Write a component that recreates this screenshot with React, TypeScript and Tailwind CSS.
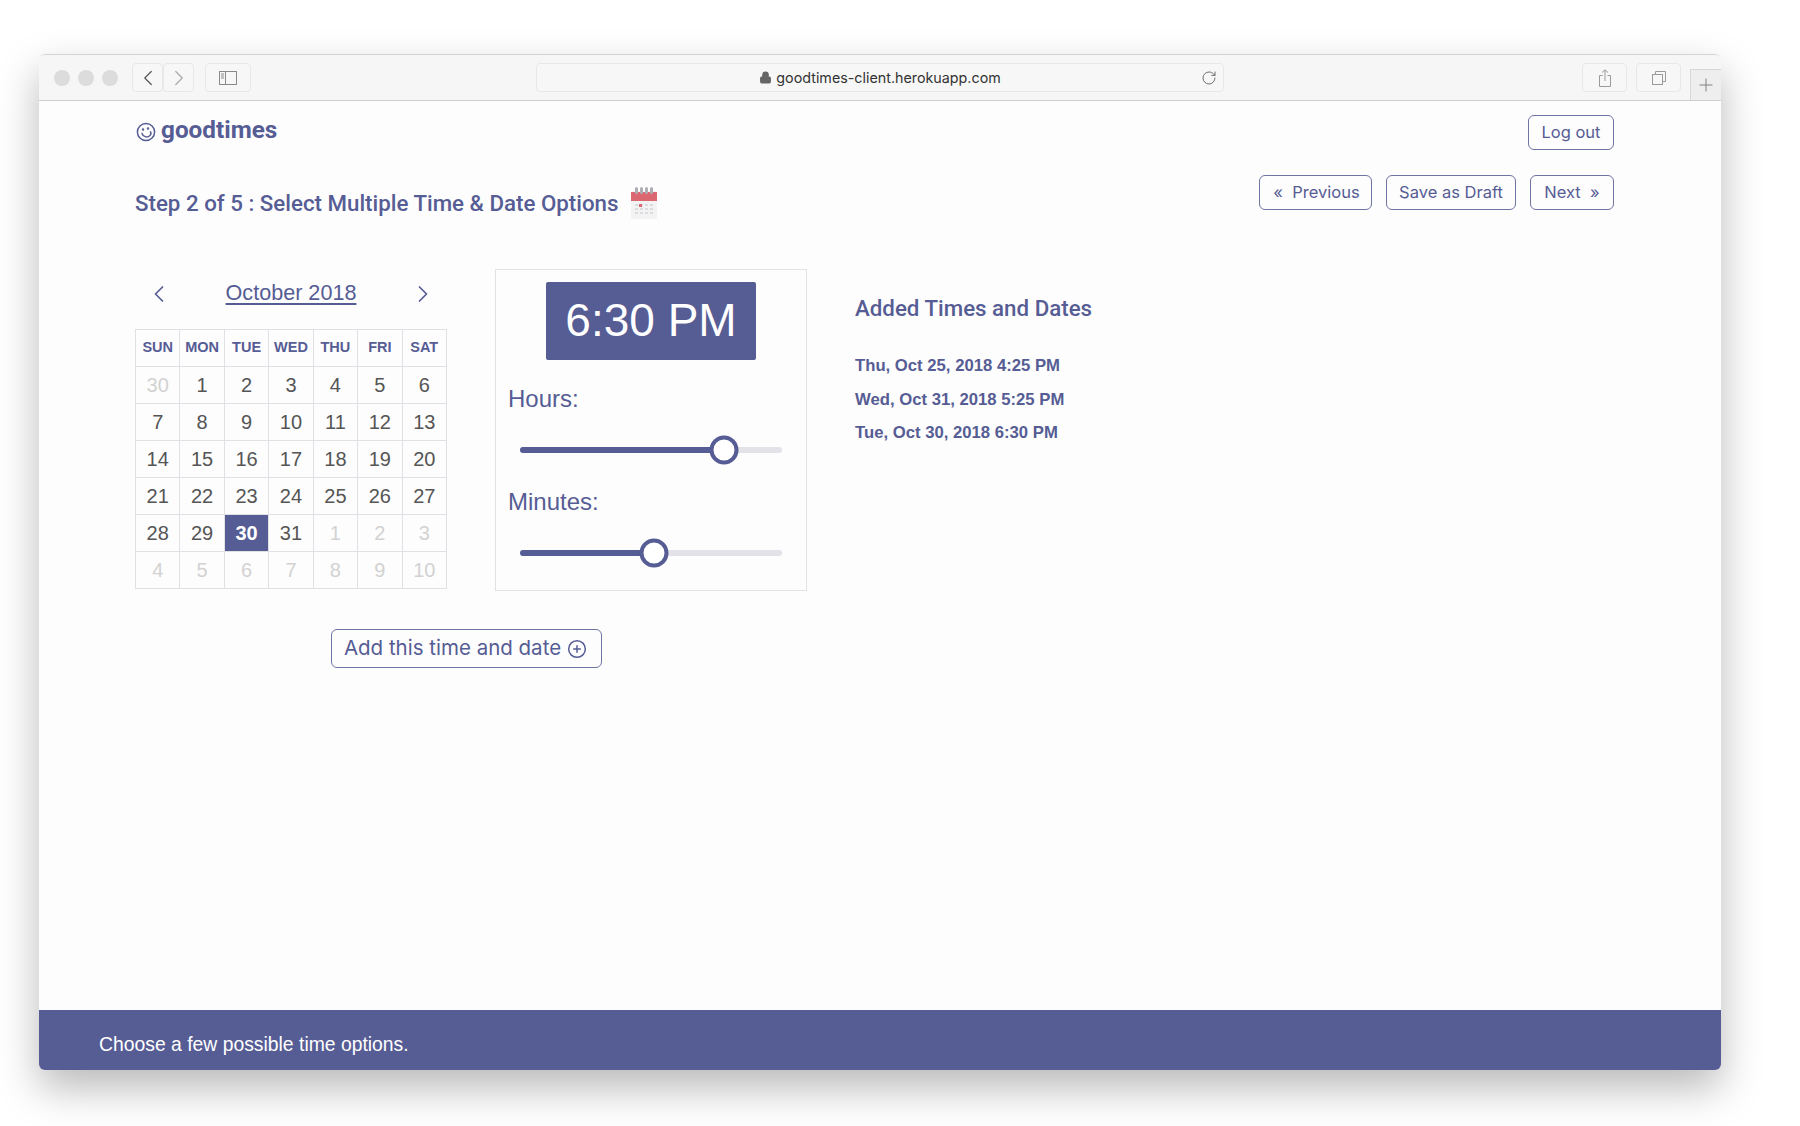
import React from 'react';
import { ChevronLeft, ChevronRight, CirclePlus, Lock, RotateCw } from 'lucide-react';

const headers = ['SUN', 'MON', 'TUE', 'WED', 'THU', 'FRI', 'SAT'];

// m = muted day outside of the month, s = selected
const weeks: (number | string)[][] = [
  ['m30', 1, 2, 3, 4, 5, 6],
  [7, 8, 9, 10, 11, 12, 13],
  [14, 15, 16, 17, 18, 19, 20],
  [21, 22, 23, 24, 25, 26, 27],
  [28, 29, 's30', 31, 'm1', 'm2', 'm3'],
  ['m4', 'm5', 'm6', 'm7', 'm8', 'm9', 'm10'],
];

const added = ['Thu, Oct 25, 2018 4:25 PM', 'Wed, Oct 31, 2018 5:25 PM', 'Tue, Oct 30, 2018 6:30 PM'];

const ToolbarButton = ({ className, children }: { className: string; children?: React.ReactNode }) => (
  <div className={`h-[29px] flex items-center justify-center border border-[#e8e8e8] rounded-[4px] bg-[#f7f7f7] text-[#8a8a8a] ${className}`}>
    {children}
  </div>
);

const OutlineButton = ({ className = '', children }: { className?: string; children: React.ReactNode }) => (
  <button className={`h-[35px] flex items-center justify-center whitespace-nowrap border-[1.5px] border-[#6f74a2] rounded-[6px] text-[#565c94] font-['Inter',sans-serif] ${className}`}>
    {children}
  </button>
);

const Slider = ({ percent }: { percent: number }) => (
  <div className="relative h-[6px] mx-[24px] rounded-full bg-[#e2e2e8]">
    <div className="h-full rounded-full bg-[#565c94]" style={{ width: `${percent}%` }} />
    <div
      className="absolute top-1/2 w-[29px] h-[29px] -translate-x-1/2 -translate-y-1/2 rounded-full border-[4px] border-[#565c94] bg-white"
      style={{ left: `${percent}%` }}
    />
  </div>
);

const CalendarEmoji = () => (
  <svg width="28" height="34" viewBox="0 0 28 34" className="opacity-80">
    <rect x="1" y="5" width="26" height="28" rx="2" fill="#f1f1f3" />
    <rect x="1" y="6" width="26" height="9" fill="#d3434f" />
    {[5, 10, 15, 20].map((x) => (
      <rect key={x} x={x} y="1" width="3" height="7" rx="1.5" fill="#9a9aa2" />
    ))}
    {[18, 22, 26].map((y) =>
      [5, 10, 15, 20].map((x) => <rect key={`${x}-${y}`} x={x} y={y} width="3" height="2" fill="#d4d4d9" />)
    )}
    <rect x="9" y="18" width="3" height="3" fill="#d3434f" />
  </svg>
);

const App = () => {
  return (
    <div className="w-[1800px] h-[1126px] bg-white pt-[54px] pl-[39px] overflow-hidden font-['Liberation_Sans',Arial,sans-serif]">
      <div className="w-[1682px] h-[1016px] flex flex-col rounded-[6px] bg-[#fdfdfd] overflow-hidden border-t border-[#d4d4d4] shadow-[0_18px_42px_rgba(0,0,0,0.28)]">
        {/* Browser bar */}
        <div className="h-[46px] shrink-0 flex items-center pl-[15px] bg-[#f6f6f6] border-b border-[#cfcfcf]">
          <div className="flex gap-[8px]">
            <span className="w-[16px] h-[16px] rounded-full bg-[#dcdcdc]" />
            <span className="w-[16px] h-[16px] rounded-full bg-[#dcdcdc]" />
            <span className="w-[16px] h-[16px] rounded-full bg-[#dcdcdc]" />
          </div>
          <div className="flex ml-[14px]">
            <ToolbarButton className="w-[31px]"><ChevronLeft size={26} strokeWidth={1.1} className="text-[#555]" /></ToolbarButton>
            <ToolbarButton className="w-[31px]"><ChevronRight size={26} strokeWidth={1.1} className="text-[#aaa]" /></ToolbarButton>
          </div>
          <ToolbarButton className="w-[46px] ml-[11px]">
            <svg width="18" height="14" viewBox="0 0 18 14" fill="none" stroke="#8a8a8a">
              <rect x="0.5" y="0.5" width="17" height="13" />
              <path d="M6.5 0.5V13.5" />
              <path d="M2 3h3M2 5h3M2 7h3" />
            </svg>
          </ToolbarButton>
          <div className="w-[689px] h-[29px] ml-[285px] relative flex items-center justify-center border border-[#e8e8e8] rounded-[4px] bg-[#f7f7f7] text-[14.3px] text-[#333] font-['Inter',sans-serif]">
            <Lock size={13} fill="#666" className="text-[#666] mr-[4px]" />
            goodtimes-client.herokuapp.com
            <RotateCw size={16} strokeWidth={1.4} className="absolute right-[6px] text-[#666]" />
          </div>
          <ToolbarButton className="w-[45px] ml-[358px]">
            <svg width="14" height="18" viewBox="0 0 14 18" fill="none" stroke="#9a9a9a">
              <path d="M4.5 6.5H1.5V17.5H12.5V6.5H9.5M7 12V1M4 3.5L7 0.8L10 3.5" />
            </svg>
          </ToolbarButton>
          <ToolbarButton className="w-[45px] ml-[9px]">
            <svg width="14" height="14" viewBox="0 0 14 14" fill="none" stroke="#9a9a9a">
              <rect x="0.5" y="3.5" width="10" height="10" />
              <path d="M3.5 3.5V0.5H13.5V10.5H10.5" />
            </svg>
          </ToolbarButton>
          <div className="w-[31px] h-[31px] ml-[9px] self-end flex items-center justify-center border-l border-t border-[#d8d8d8] bg-[#eeeeee] text-[#777]">
            <svg width="14" height="14" viewBox="0 0 14 14" stroke="#808080"><path d="M7 0.5V13.5M0.5 7H13.5" /></svg>
          </div>
        </div>

        {/* Page */}
        <div className="flex-1 relative pl-[96px] pr-[107px]">
          <div className="flex justify-between items-start">
            <div className="flex items-center gap-[5px] pt-[15px] pl-[1px] text-[#565c94]">
              <svg width="20" height="20" viewBox="0 0 20 20" fill="none" stroke="#565c94" strokeWidth="1.5" className="mt-[3px]">
                <circle cx="10" cy="10" r="8.6" />
                <path d="M6 11.5c1 3 5 4.5 7.5 2.5 1.5-1.2 1.6-3 1-4" strokeLinecap="round" />
                <circle cx="7" cy="7.5" r="0.5" />
                <circle cx="12" cy="6.5" r="0.5" />
              </svg>
              <span className="text-[24.3px] leading-[28px] font-bold font-['Roboto',sans-serif]">goodtimes</span>
            </div>
            <OutlineButton className="w-[86px] mt-[14px] text-[16.5px]">Log out</OutlineButton>
          </div>

          <div className="flex justify-between items-start h-[35px] mt-[25px]">
            <div className="flex items-center gap-[12px] text-[#565c94] pt-[11px]">
              <h1 className="text-[22.3px] leading-[34px] font-medium font-['Roboto',sans-serif]">Step 2 of 5 : Select Multiple Time &amp; Date Options</h1>
              <CalendarEmoji />
            </div>
            <div className="flex gap-[14px]">
              <OutlineButton className="w-[113px] text-[16.5px] pl-[2px]">«&nbsp;&nbsp;Previous</OutlineButton>
              <OutlineButton className="w-[130px] text-[16.5px]">Save as Draft</OutlineButton>
              <OutlineButton className="w-[84px] text-[16.5px]">Next&nbsp;&nbsp;»</OutlineButton>
            </div>
          </div>

          <div className="flex items-start mt-[59px]">
            {/* Calendar */}
            <div className="w-[312px]">
              <div className="flex items-center justify-between h-[60px] pb-[11px] px-[10px] text-[#565c94]">
                <ChevronLeft size={28} strokeWidth={1.5} />
                <span className="text-[21.6px] underline underline-offset-[3px]">October 2018</span>
                <ChevronRight size={28} strokeWidth={1.5} />
              </div>
              <table className="w-full table-fixed border-collapse">
                <thead>
                  <tr>
                    {headers.map((h) => (
                      <th key={h} className="h-[37px] border border-[#e0e0e5] p-0 text-[14.5px] font-bold text-[#565c94]">{h}</th>
                    ))}
                  </tr>
                </thead>
                <tbody>
                  {weeks.map((week, i) => (
                    <tr key={i}>
                      {week.map((d, j) => {
                        const label = String(d).replace(/^[ms]/, '');
                        const muted = String(d).startsWith('m');
                        const selected = String(d).startsWith('s');
                        return (
                          <td
                            key={j}
                            className={`h-[37px] border border-[#e0e0e5] p-0 text-center text-[20px] ${
                              selected ? 'bg-[#565c94] text-white font-bold' : muted ? 'text-[#d2d2d2]' : 'text-[#555555]'
                            }`}
                          >
                            {label}
                          </td>
                        );
                      })}
                    </tr>
                  ))}
                </tbody>
              </table>
            </div>

            {/* Time picker */}
            <div className="w-[312px] h-[322px] ml-[48px] border border-[#e2e2e6] flex flex-col text-[#565c94]">
              <div className="w-[210px] h-[78px] mt-[12px] pb-[2px] mx-auto flex items-center justify-center rounded-[2px] bg-[#565c94] text-white text-[46px]">
                6:30 PM
              </div>
              <div className="text-[24px] leading-[30px] mt-[24px] ml-[12px]">Hours:</div>
              <div className="mt-[33px]"><Slider percent={78} /></div>
              <div className="text-[24px] leading-[30px] mt-[34px] ml-[12px]">Minutes:</div>
              <div className="mt-[33px]"><Slider percent={51} /></div>
            </div>

            {/* Added list */}
            <div className="ml-[48px] text-[#565c94]">
              <h2 className="text-[22.3px] leading-[28px] mt-[25px] font-['Roboto',sans-serif] font-medium">Added Times and Dates</h2>
              <ul className="mt-[34px] flex flex-col gap-[13.5px] text-[16.7px] leading-[20px] font-bold">
                {added.map((a) => <li key={a}>{a}</li>)}
              </ul>
            </div>
          </div>

          <OutlineButton className="w-[271px] h-[39px] mt-[38px] ml-[196px] text-[20.5px] gap-[6px] pr-[2px]">
            Add this time and date <CirclePlus size={20} strokeWidth={1.8} />
          </OutlineButton>
        </div>

        {/* Footer hint */}
        <div className="h-[60px] shrink-0 flex items-center pl-[60px] pt-[10px] bg-[#565c94] text-white text-[19.35px]">
          Choose a few possible time options.
        </div>
      </div>
    </div>
  );
};

export default App;
